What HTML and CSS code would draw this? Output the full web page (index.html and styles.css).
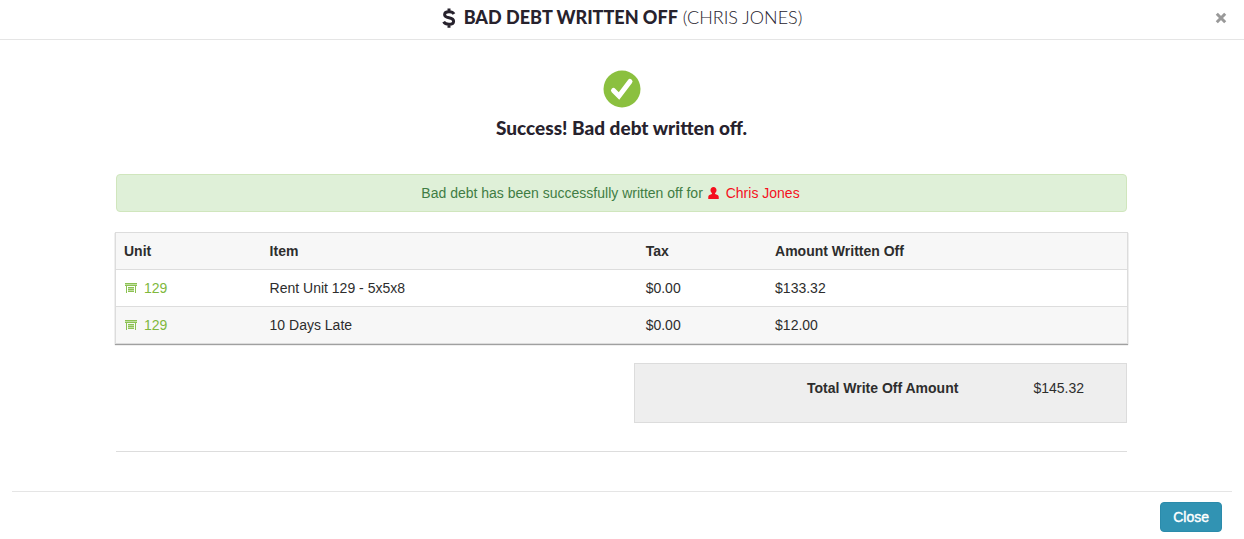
FILE: index.html
```html
<!DOCTYPE html>
<html lang="en">
<head>
<meta charset="utf-8">
<meta name="viewport" content="width=device-width, initial-scale=1">
<title>Bad Debt Written Off</title>
<link rel="stylesheet" href="styles.css">
</head>
<body>
<svg class="sprite" aria-hidden="true">
  <symbol id="unit" viewBox="0 0 12 10">
    <path fill="#8cc152" d="M0 0h12v1H0zM0 2h12v1H0zM1 3h1v7H1zM10 3h1v7h-1zM3 4h6v1H3zM3 6h6v1H3zM3 8h6v1H3z"/>
    <path fill="#c0dfa0" d="M0 1h12v1H0zM3 5h6v1H3zM3 7h6v1H3z"/>
  </symbol>
</svg>
<header class="modal-header">
  <h1 class="modal-title">
    <svg class="dollar" viewBox="0 0 14 20" aria-hidden="true"><path d="M12 6C11 4.300 9.300 3.800 7 3.800 4.500 3.800 2.600 4.800 2.600 6.700 2.600 8.800 4.600 9.300 7 9.800 9.600 10.300 11.600 11 11.600 13.200 11.600 15.200 9.600 16.200 7 16.200 4.600 16.200 2.700 15.500 1.600 13.700M7 0.500V4M7 16V19.800"/></svg>
    <span><strong>BAD DEBT WRITTEN OFF</strong> (CHRIS JONES)</span>
  </h1>
  <button class="dismiss" type="button" aria-label="Dismiss">
    <svg viewBox="0 0 12 12" aria-hidden="true"><path d="M1.800 1.800 10.200 10.200M10.200 1.800 1.800 10.200"/></svg>
  </button>
</header>
<main class="content">
  <section class="result">
    <svg class="check" viewBox="0 0 38 38" aria-hidden="true"><circle cx="19" cy="19" r="18.500"/><path d="M10.500 20.500 16 26 27 11.500"/></svg>
    <h2 class="result-title">Success! Bad debt written off.</h2>
  </section>
  <p class="alert">Bad debt has been successfully written off for
    <a class="person" href="#"><svg viewBox="0 0 12 13" aria-hidden="true"><path d="M6 0C4 0 2.700 1.500 2.700 3.500 2.700 4.800 3.500 6 4.300 6.700V7.700L1.500 8.600Q.3 9.100.3 10.500V13H11.700V10.500Q11.700 9.100 10.500 8.600L7.700 7.700V6.700C8.500 6 9.300 4.800 9.300 3.500 9.300 1.500 8 0 6 0Z"/></svg>Chris Jones</a></p>
  <table class="items">
    <colgroup><col class="col-unit"><col class="col-item"><col class="col-tax"><col></colgroup>
    <thead>
      <tr><th scope="col">Unit</th><th scope="col">Item</th><th scope="col">Tax</th><th scope="col">Amount Written Off</th></tr>
    </thead>
    <tbody>
      <tr><td><a class="unit" href="#"><svg aria-hidden="true"><use href="#unit"/></svg>129</a></td><td>Rent Unit 129 - 5x5x8</td><td>$0.00</td><td>$133.32</td></tr>
      <tr><td><a class="unit" href="#"><svg aria-hidden="true"><use href="#unit"/></svg>129</a></td><td>10 Days Late</td><td>$0.00</td><td>$12.00</td></tr>
    </tbody>
  </table>
  <dl class="total"><dt>Total Write Off Amount</dt><dd>$145.32</dd></dl>
  <hr class="rule">
</main>
<footer class="modal-footer"><button class="close" type="button">Close</button></footer>
</body>
</html>
```

FILE: styles.css
```css
* { box-sizing: border-box; }
body {
  margin: 0;
  background: #fff;
  color: #2d2d2d;
  font: 14px/20px "Liberation Sans", Arial, sans-serif;
}
.sprite { display: none; }
.modal-header {
  display: grid;
  grid-template-columns: 1fr auto 1fr;
  align-items: center;
  padding: 0 16px 4px;
  border-bottom: 1px solid #e5e5e5;
}
.modal-title {
  grid-column: 2;
  display: flex;
  align-items: center;
  gap: 8px;
  margin: 0;
  color: #27222d;
  font: 400 18px/35px Lato, sans-serif;
}
.modal-title span { font-weight: 300; }
.modal-title strong { font-weight: 900; }
.dollar { width: 14px; height: 20px; fill: none; stroke: #27222d; stroke-width: 3; }
.dismiss {
  justify-self: end;
  display: flex;
  padding: 1px;
  border: 0;
  background: none;
}
.dismiss svg { width: 12px; height: 12px; stroke: #999; stroke-width: 3; }
.content { padding: 30px 117px 0 116px; }
.result {
  display: flex;
  flex-direction: column;
  align-items: center;
  gap: 8px;
}
.check { width: 38px; height: 38px; fill: #8bc03f; }
.check path { fill: none; stroke: #fff; stroke-width: 5; stroke-linecap: round; }
.result-title {
  margin: 0;
  color: #27222d;
  font: 900 19px/24px Lato, sans-serif;
}
.alert {
  margin: 34px 0 21px;
  padding: 8px 30px 8px 8px;
  border: 1px solid #d0e6bd;
  border-radius: 4px;
  background: #dff0d8;
  color: #3f7d44;
  text-align: center;
}
.person { margin-left: 1px; color: #f5101e; text-decoration: none; }
.person svg { width: 11px; height: 12px; margin-right: 7px; fill: currentColor; vertical-align: -1px; }
.items {
  width: 100%;
  table-layout: fixed;
  border-collapse: separate;
  border-spacing: 0;
  background: #fff;
  box-shadow: 0 0 0 1px #dcdcdc, 0 1px 1px 1px #a0a0a0;
}
.col-unit { width: 14.4%; }
.col-item { width: 37.2%; }
.col-tax { width: 12.8%; }
.items th, .items td { padding: 8px; text-align: left; }
.items td { border-top: 1px solid #ddd; }
.items th, .items tr:nth-child(even) td { background: #f7f7f7; }
.unit { color: #80b83c; text-decoration: none; }
.unit svg { width: 12px; height: 10px; margin: 0 7px 0 1px; }
.total {
  display: flex;
  justify-content: flex-end;
  gap: 75px;
  width: 48.8%;
  margin: 20px 0 28px auto;
  padding: 14px 42px 24px 16px;
  border: 1px solid #dcdcdc;
  background: #eee;
}
.total dt { font-weight: 700; }
.total dd { margin: 0; }
.rule { margin: 0; border: 0; border-top: 1px solid #ddd; }
.modal-footer {
  display: flex;
  justify-content: flex-end;
  margin: 39px 12px 0;
  padding: 10px;
  border-top: 1px solid #e5e5e5;
}
.close {
  padding: 4px 12px;
  border: 1px solid #2b8bab;
  border-radius: 4px;
  background: #3193b3;
  color: #fff;
  font: 14px/20px "Liberation Sans", Arial, sans-serif;
  -webkit-text-stroke: 0.4px #fff;
}
```
